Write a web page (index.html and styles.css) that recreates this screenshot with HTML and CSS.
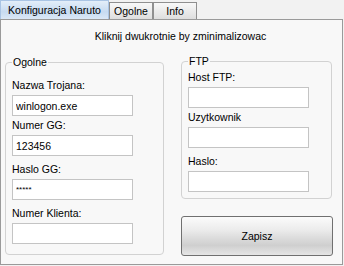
FILE: index.html
```html
<!DOCTYPE html>
<html lang="pl">
<head>
    <meta charset="UTF-8">
    <meta name="viewport" content="width=device-width, initial-scale=1.0">
    <title>Konfiguracja Naruto</title>
    <link rel="stylesheet" href="styles.css">
</head>
<body>
    <div class="tabs">
        <div class="tab active">Konfiguracja Naruto</div>
        <div class="tab">Ogolne</div>
        <div class="tab">Info</div>
    </div>
    <div class="panel">
        <p class="hint">Kliknij dwukrotnie by zminimalizowac</p>
        <div class="columns">
            <fieldset class="group group-main">
                <legend>Ogolne</legend>
                <div class="field">
                    <label>Nazwa Trojana:</label>
                    <input type="text" value="winlogon.exe">
                </div>
                <div class="field near">
                    <label>Numer GG:</label>
                    <input type="text" value="123456">
                </div>
                <div class="field">
                    <label>Haslo GG:</label>
                    <input type="text" class="secret" value="*****">
                </div>
                <div class="field">
                    <label>Numer Klienta:</label>
                    <input type="text" value="">
                </div>
            </fieldset>
            <div class="side">
                <fieldset class="group group-ftp">
                    <legend>FTP</legend>
                    <div class="field">
                        <label>Host FTP:</label>
                        <input type="text" value="">
                    </div>
                    <div class="field near">
                        <label>Uzytkownik</label>
                        <input type="text" value="">
                    </div>
                    <div class="field">
                        <label>Haslo:</label>
                        <input type="text" value="">
                    </div>
                </fieldset>
                <button class="save">Zapisz</button>
            </div>
        </div>
    </div>
</body>
</html>
```

FILE: styles.css
```css
body {
    margin: 0;
    background-color: #f2f2f2;
    font-family: "Liberation Sans", Arial, sans-serif;
    font-size: 10.5px;
    color: #000;
}
.tabs {
    display: flex;
    height: 19px;
    align-items: flex-end;
    position: relative;
    z-index: 1;
}
.tab {
    box-sizing: border-box;
    width: 44px;
    height: 17px;
    line-height: 16px;
    white-space: nowrap;
    text-align: center;
    border: 1px solid #8f8f8f;
    border-bottom: none;
    background: linear-gradient(#f8f8f8, #dedede);
}
.tab.active {
    width: 109px;
    height: 19px;
    line-height: 19px;
    border-color: #a9c4e4;
    background: linear-gradient(#e3eef9, #c7dbf1 60%, #dbe8f6);
}
.panel {
    width: 341px;
    height: 244px;
    border: 1px solid #9a9a9a;
    background-color: #f8f8f8;
}
.hint {
    margin: 10px 0 0;
    line-height: 13px;
    text-align: center;
    padding-left: 18px;
}
.columns {
    display: flex;
    align-items: flex-start;
    gap: 17px;
    margin-top: 13px;
    padding-left: 4px;
}
.group {
    margin: 0;
    border: 1px solid #d2d2d2;
    border-radius: 4px;
    padding: 0 6px;
}
.group legend {
    padding: 0 1px;
    margin-left: 0;
    line-height: 13px;
}
.group-main {
    width: 145px;
    padding-top: 10px;
    padding-bottom: 10px;
}
.side {
    display: flex;
    flex-direction: column;
    margin-top: -1px;
}
.group-ftp {
    width: 137px;
    padding-top: 3px;
    padding-bottom: 6px;
}
.field {
    display: flex;
    flex-direction: column;
    margin-top: 7px;
}
.field:first-of-type {
    margin-top: 0;
}
.field.near {
    margin-top: 3px;
}
.field label {
    line-height: 13px;
    margin-bottom: 3px;
}
.field input {
    box-sizing: border-box;
    width: 121px;
    height: 21px;
    margin: 0;
    border: 1px solid #c4c4c4;
    background-color: #fff;
    font-family: "Liberation Sans", Arial, sans-serif;
    font-size: 10.5px;
    padding: 0 3px;
    color: #000;
}
.field input.secret {
    font-size: 8px;
}
.save {
    margin-top: 17px;
    width: 152px;
    height: 40px;
    border: 1px solid #707070;
    border-radius: 3px;
    background: linear-gradient(#fbfbfb, #ebebeb 35%, #dcdcdc 55%, #cfcfcf 75%, #e6e6e6);
    font-family: "Liberation Sans", Arial, sans-serif;
    font-size: 10.5px;
    color: #000;
}
```
